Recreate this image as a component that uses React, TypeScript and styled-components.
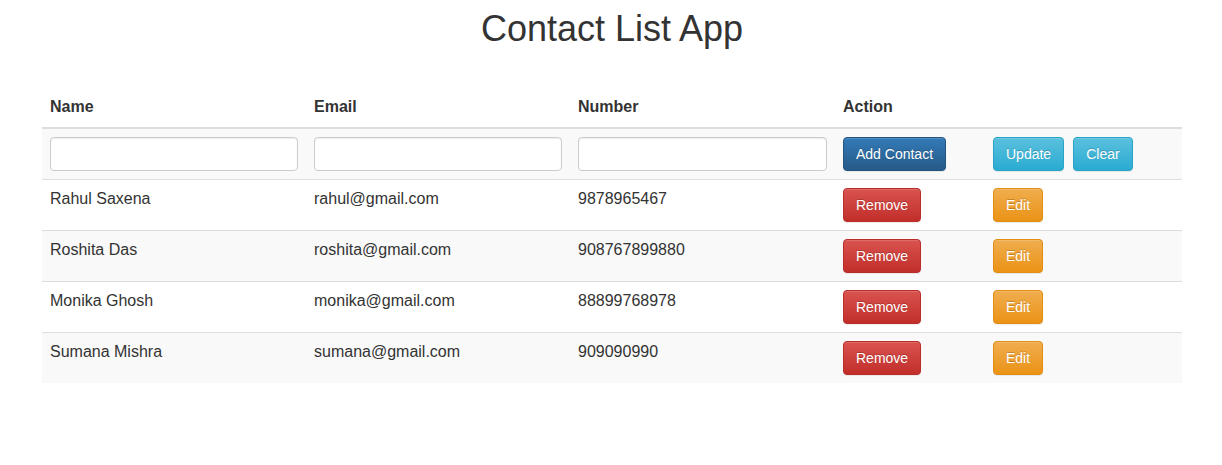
import React from 'react'
import styled, { createGlobalStyle, css } from 'styled-components'

const GlobalStyle = createGlobalStyle`
  * { box-sizing: border-box; }
  body {
    margin: 0;
    font-family: "Liberation Sans", Arial, Helvetica, sans-serif;
    font-size: 14px;
    line-height: 1.42857;
    color: #333;
    background: #fff;
  }
`

type Contact = { name: string; email: string; number: string }

const contacts: Contact[] = [
  { name: 'Rahul Saxena', email: 'rahul@gmail.com', number: '9878965467' },
  { name: 'Roshita Das', email: 'roshita@gmail.com', number: '908767899880' },
  { name: 'Monika Ghosh', email: 'monika@gmail.com', number: '88899768978' },
  { name: 'Sumana Mishra', email: 'sumana@gmail.com', number: '909090990' }
]

const Container = styled.div`
  width: 1170px;
  margin: 0 auto;
  padding: 0 14px 0 16px;
`

const Title = styled.h1`
  margin: 9px 0 0;
  font-size: 36px;
  font-weight: 400;
  line-height: 40px;
  text-align: center;
`

const Table = styled.table`
  width: 100%;
  margin-top: 39px;
  border-collapse: collapse;
  border-spacing: 0;
  font-size: 16px;
  line-height: 1.42857;
`

const HeadCell = styled.th`
  padding: 8px;
  text-align: left;
  font-weight: 700;
  vertical-align: bottom;
  border-bottom: 2px solid #ddd;
`

const Row = styled.tr`
  &:nth-child(odd) {
    background: #f9f9f9;
  }
`

const Cell = styled.td`
  padding: 8px;
  vertical-align: top;
  border-top: 1px solid #ddd;
`

const Input = styled.input`
  display: block;
  width: 100%;
  height: 34px;
  padding: 6px 12px;
  font-family: inherit;
  font-size: 14px;
  color: #555;
  background: #fff;
  border: 1px solid #ccc;
  border-radius: 4px;
  box-shadow: inset 0 1px 1px rgba(0, 0, 0, 0.075);
`

const variants = {
  primary: css`
    background-image: linear-gradient(to bottom, #337ab7 0, #265a88 100%);
    border-color: #245580;
  `,
  info: css`
    background-image: linear-gradient(to bottom, #5bc0de 0, #2aabd2 100%);
    border-color: #28a4c9;
  `,
  danger: css`
    background-image: linear-gradient(to bottom, #d9534f 0, #c12e2a 100%);
    border-color: #b92c28;
  `,
  warning: css`
    background-image: linear-gradient(to bottom, #f0ad4e 0, #eb9316 100%);
    border-color: #e38d13;
  `
}

const Button = styled.button<{ $variant: keyof typeof variants; $gap?: boolean }>`
  display: inline-block;
  margin-left: ${p => (p.$gap ? '9px' : '0')};
  padding: 6px 12px;
  font-family: inherit;
  font-size: 14px;
  line-height: 20px;
  color: #fff;
  border: 1px solid transparent;
  border-radius: 4px;
  text-shadow: 0 -1px 0 rgba(0, 0, 0, 0.2);
  box-shadow: inset 0 1px 0 rgba(255, 255, 255, 0.15), 0 1px 1px rgba(0, 0, 0, 0.075);
  cursor: pointer;
  ${p => variants[p.$variant]}
`

const App = () => {
  return (
    <Container>
      <GlobalStyle />
      <Title>Contact List App</Title>
      <Table>
        <colgroup>
          <col style={{ width: 264 }} />
          <col style={{ width: 264 }} />
          <col style={{ width: 265 }} />
          <col style={{ width: 150 }} />
          <col />
        </colgroup>
        <thead>
          <tr>
            <HeadCell>Name</HeadCell>
            <HeadCell>Email</HeadCell>
            <HeadCell>Number</HeadCell>
            <HeadCell>Action</HeadCell>
            <HeadCell />
          </tr>
        </thead>
        <tbody>
          <Row>
            <Cell><Input type='text' /></Cell>
            <Cell><Input type='email' /></Cell>
            <Cell><Input type='text' /></Cell>
            <Cell><Button $variant='primary'>Add Contact</Button></Cell>
            <Cell>
              <Button $variant='info'>Update</Button>
              <Button $variant='info' $gap>Clear</Button>
            </Cell>
          </Row>
          {contacts.map(c => (
            <Row key={c.email}>
              <Cell>{c.name}</Cell>
              <Cell>{c.email}</Cell>
              <Cell>{c.number}</Cell>
              <Cell><Button $variant='danger'>Remove</Button></Cell>
              <Cell><Button $variant='warning'>Edit</Button></Cell>
            </Row>
          ))}
        </tbody>
      </Table>
    </Container>
  )
}

export default App
